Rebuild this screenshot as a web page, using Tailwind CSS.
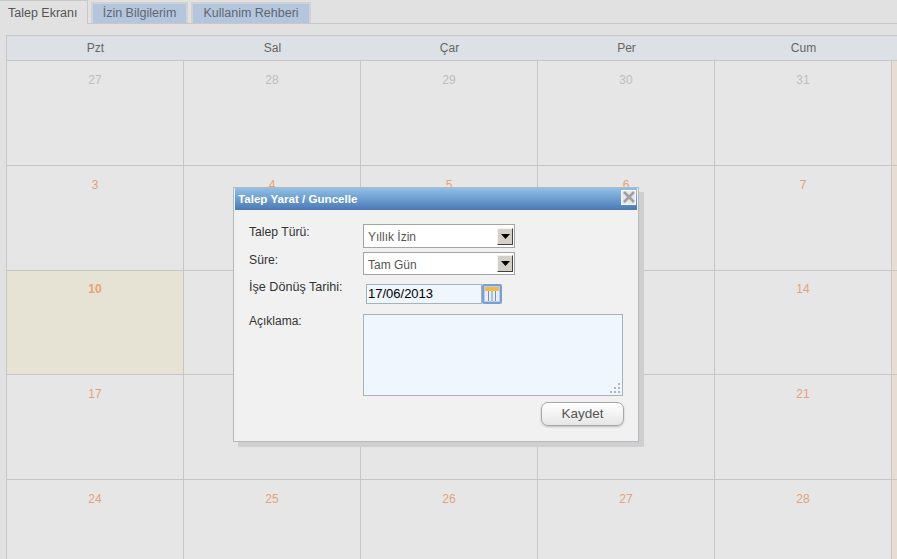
<!DOCTYPE html>
<html>
<head>
  <title>Talep Ekranı</title>
  <meta charset="utf-8">
  <script src="https://cdn.jsdelivr.net/npm/@tailwindcss/browser@4"></script>
</head>
<body class="h-[559px] w-[897px] overflow-hidden relative bg-[#e1e1e1] font-['Liberation_Sans',Arial,sans-serif] text-[12px]">

  <!-- Sekmeler -->
  <div class="flex h-[24px] items-end border-b border-[#c8c8c8] text-[12.5px]">
    <div class="h-[24px] w-[88px] -mb-px bg-[#e1e1e1] border-r border-t border-[#c8c8c8] flex items-center pl-[8px] text-[#555] pt-[2px]">Talep Ekranı</div>
    <div class="h-[21px] w-[97px] ml-[3px] bg-[#b4c5de] border-[2px] border-b-0 border-[#d2d2d2] flex items-center justify-center text-[#5f6770]">İzin Bilgilerim</div>
    <div class="h-[21px] w-[120px] ml-[3px] bg-[#b4c5de] border-[2px] border-b-0 border-[#d2d2d2] flex items-center justify-center text-[#5f6770]">Kullanim Rehberi</div>
  </div>

  <!-- Takvim -->
  <div class="ml-[6px] mt-[11px] w-[891px]">
    <div class="grid grid-cols-[repeat(5,177px)_6px] h-[26px] bg-[#dde0e4] border-t border-b border-l border-[#c6c6c6] text-[#666] text-center leading-[24px]">
      <div>Pzt</div><div>Sal</div><div>Çar</div><div>Per</div><div>Cum</div><div></div>
    </div>
    <div class="grid grid-cols-[repeat(5,177px)_6px] h-[105px] border-b border-l border-[#c6c6c6] bg-[#e6e6e6] text-center text-[#bdbdbd]">
      <div class="border-r border-[#c6c6c6] pt-[10px]">27</div>
      <div class="border-r border-[#c6c6c6] pt-[10px]">28</div>
      <div class="border-r border-[#c6c6c6] pt-[10px]">29</div>
      <div class="border-r border-[#c6c6c6] pt-[10px]">30</div>
      <div class="border-r border-[#c6c6c6] pt-[10px]">31</div>
      <div class="bg-[#e8ddd2]"></div>
    </div>
    <div class="grid grid-cols-[repeat(5,177px)_6px] h-[105px] border-b border-l border-[#c6c6c6] bg-[#e6e6e6] text-center text-[#e3a27a]">
      <div class="border-r border-[#c6c6c6] pt-[10px]">3</div>
      <div class="border-r border-[#c6c6c6] pt-[10px]">4</div>
      <div class="border-r border-[#c6c6c6] pt-[10px]">5</div>
      <div class="border-r border-[#c6c6c6] pt-[10px]">6</div>
      <div class="border-r border-[#c6c6c6] pt-[10px]">7</div>
      <div class="bg-[#e8ddd2]"></div>
    </div>
    <!-- 11-13 ve 18-20 pencerenin altinda kaliyor -->
    <div class="grid grid-cols-[repeat(5,177px)_6px] h-[104px] border-b border-l border-[#c6c6c6] bg-[#e6e6e6] text-center text-[#e3a27a]">
      <div class="border-r border-[#c6c6c6] pt-[9px] bg-[#e6e3d5] font-bold">10</div>
      <div class="border-r border-[#c6c6c6]"></div>
      <div class="border-r border-[#c6c6c6]"></div>
      <div class="border-r border-[#c6c6c6]"></div>
      <div class="border-r border-[#c6c6c6] pt-[9px]">14</div>
      <div class="bg-[#e8ddd2]"></div>
    </div>
    <div class="grid grid-cols-[repeat(5,177px)_6px] h-[105px] border-b border-l border-[#c6c6c6] bg-[#e6e6e6] text-center text-[#e3a27a]">
      <div class="border-r border-[#c6c6c6] pt-[10px]">17</div>
      <div class="border-r border-[#c6c6c6]"></div>
      <div class="border-r border-[#c6c6c6]"></div>
      <div class="border-r border-[#c6c6c6]"></div>
      <div class="border-r border-[#c6c6c6] pt-[10px]">21</div>
      <div class="bg-[#e8ddd2]"></div>
    </div>
    <div class="grid grid-cols-[repeat(5,177px)_6px] h-[80px] border-l border-[#c6c6c6] bg-[#e6e6e6] text-center text-[#e3a27a]">
      <div class="border-r border-[#c6c6c6] pt-[10px]">24</div>
      <div class="border-r border-[#c6c6c6] pt-[10px]">25</div>
      <div class="border-r border-[#c6c6c6] pt-[10px]">26</div>
      <div class="border-r border-[#c6c6c6] pt-[10px]">27</div>
      <div class="border-r border-[#c6c6c6] pt-[10px]">28</div>
      <div class="bg-[#e8ddd2]"></div>
    </div>
  </div>

  <!-- Talep penceresi -->
  <div class="absolute left-[233px] top-[187px] w-[406px] h-[255px] bg-[#f1f1f1] border border-[#b4b8bf] shadow-[5px_5px_0_#cfcfcf] px-[1px]">
    <div class="h-[22px] bg-gradient-to-b from-[#90c0e6] to-[#4b79b5] flex items-center justify-between pl-[3px] pr-[1px] text-white font-bold text-[11.6px]">
      <span class="-mt-[1px]">Talep Yarat / Guncelle</span>
      <span class="w-[15px] h-[15px] -mt-[4px] bg-[#e4e7ec] border border-[#fafafa] flex items-center justify-center">
        <svg width="12" height="12" viewBox="0 0 12 12"><path d="M1 1 L11 11 M11 1 L1 11" stroke="#a0a0a0" stroke-width="2.6"/></svg>
      </span>
    </div>

    <div class="relative flex flex-col pl-[14px] pt-[14px] text-[#333]">
      <div class="flex h-[28px]">
        <label class="w-[114px] pt-[1px] text-[12.2px] leading-[14px]">Talep Türü:</label>
        <div class="w-[152px] h-[24px] bg-white border border-[#a5a5a5] flex items-center justify-between pl-[4px] pr-[1px] text-[#555]">
          <span class="pt-[1px]">Yıllık İzin</span>
          <span class="w-[16px] h-[17px] bg-[#d4d0c8] border border-[#f4f4f4] border-r-[#404040] border-b-[#404040] flex items-center justify-center">
            <svg width="9" height="5" viewBox="0 0 9 5"><path d="M0 0 H9 L4.5 5 Z" fill="#000"/></svg>
          </span>
        </div>
      </div>
      <div class="flex h-[28px]">
        <label class="w-[114px] pt-[1px] text-[12.2px] leading-[14px]">Süre:</label>
        <div class="w-[152px] h-[23px] bg-white border border-[#a5a5a5] flex items-center justify-between pl-[4px] pr-[1px] text-[#555]">
          <span class="pt-[2px]">Tam Gün</span>
          <span class="w-[16px] h-[17px] bg-[#d4d0c8] border border-[#f4f4f4] border-r-[#404040] border-b-[#404040] flex items-center justify-center">
            <svg width="9" height="5" viewBox="0 0 9 5"><path d="M0 0 H9 L4.5 5 Z" fill="#000"/></svg>
          </span>
        </div>
      </div>
      <div class="flex h-[34px]">
        <label class="w-[117px] text-[12.6px] leading-[14px]">İşe Dönüş Tarihi:</label>
        <div class="w-[116px] h-[20px] mt-[4px] bg-[#eff6fd] border border-[#a8b2bd] flex items-center pl-[1px] text-black text-[13px]">17/06/2013</div>
        <span class="w-[20px] h-[20px] mt-[4px] rounded-[2px] bg-[#b8cdeb] border-[2px] border-[#7b9fd4] flex flex-col items-center pt-[1px]">
          <svg width="14" height="14" viewBox="0 0 14 14"><rect x="0" y="0" width="14" height="4" fill="#f5b942"/><rect x="0" y="4" width="14" height="10" fill="#e6eef8"/><path d="M3.5 4 V14 M7 4 V14 M10.5 4 V14" stroke="#7890b0" stroke-width="1"/></svg>
        </span>
      </div>
      <div class="flex">
        <label class="w-[114px] leading-[14px]">Açıklama:</label>
        <div class="relative w-[260px] h-[82px] bg-[#eff6fd] border border-[#a8b2bd]">
          <svg class="absolute right-[1px] bottom-[1px]" width="11" height="11" viewBox="0 0 11 11" fill="#b5b5b5">
            <rect x="8" y="0" width="2" height="2"/><rect x="4" y="4" width="2" height="2"/><rect x="8" y="4" width="2" height="2"/><rect x="0" y="8" width="2" height="2"/><rect x="4" y="8" width="2" height="2"/><rect x="8" y="8" width="2" height="2"/>
          </svg>
        </div>
      </div>
      <div class="flex justify-end w-[375px] mt-[6px]">
        <button class="w-[83px] h-[24px] rounded-[7px] border border-[#a8a8a8] bg-gradient-to-b from-[#ffffff] to-[#e6e6e6] shadow-[0_1px_2px_#bbb] text-[#555] text-[13.5px]">Kaydet</button>
      </div>
    </div>
  </div>

</body>
</html>
